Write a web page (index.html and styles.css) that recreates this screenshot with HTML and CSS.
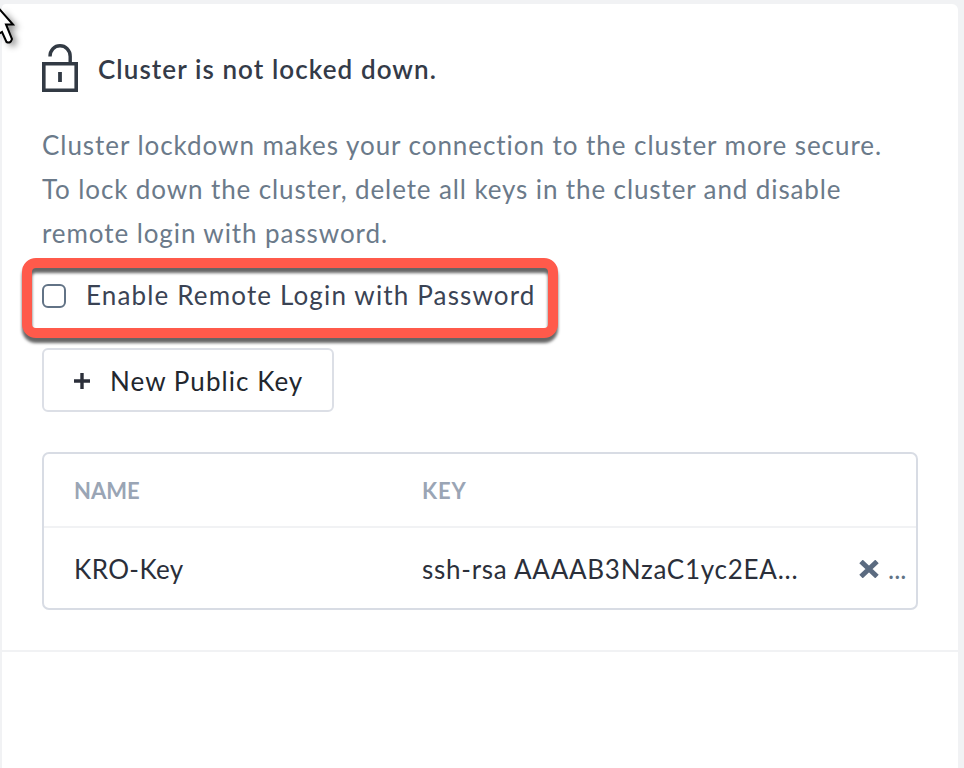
FILE: index.html
```html
<!DOCTYPE html>
<html lang="en">
<head>
<meta charset="utf-8">
<title>Cluster Lockdown</title>
<link rel="stylesheet" href="styles.css">
</head>
<body>
<main class="card">
  <section class="lockdown">
    <header class="status">
      <svg class="lock" width="36" height="50" viewBox="0 0 36 50" fill="none" stroke="#323a44">
        <path d="M8 13.500C8 7 12.500 2.800 18 2.800S28.200 7 28.200 13.500V20" stroke-width="3.400"/>
        <path d="M1.800 20.800H34.200V47.200H1.800Z" stroke-width="3.600"/>
        <path d="M18 29V39" stroke-width="3.800"/>
      </svg>
      <h1 class="title">Cluster is not locked down.</h1>
    </header>
    <p class="description">
      <span class="line line-1">Cluster lockdown makes your connection to the cluster more secure.</span>
      <span class="line line-2">To lock down the cluster, delete all keys in the cluster and disable</span>
      <span class="line line-3">remote login with password.</span>
    </p>
    <label class="remote-login">
      <input class="checkbox" type="checkbox">
      <span>Enable Remote Login with Password</span>
    </label>
    <button class="new-key" type="button">
      <svg width="16" height="16" viewBox="0 0 16 16" stroke="#2b2f3a" stroke-width="3.400"><path d="M8 0V16M0 8H16"/></svg>
      <span>New Public Key</span>
    </button>
    <div class="keys">
      <div class="row head"><span>NAME</span><span class="key-head">KEY</span></div>
      <div class="row entry">
        <span class="name">KRO-Key</span>
        <span class="key">ssh-rsa AAAAB3NzaC1yc2EA...</span>
        <span class="actions">
          <svg width="20" height="18" viewBox="0 0 20 18" stroke="#5b6b80" stroke-width="5"><path d="M2 1.500L18 16.500M18 1.500L2 16.500"/></svg>
          <span>...</span>
        </span>
      </div>
    </div>
  </section>
</main>
<svg class="cursor" width="28" height="52" viewBox="0 0 28 52"><path d="M-6 3L13 24.500H6L12 39Q10.500 44 6.500 42L2 32L-8 38Z" fill="#fff" stroke="#000" stroke-width="2"/></svg>
</body>
</html>
```

FILE: styles.css
```css
* { box-sizing: border-box; }
body {
  margin: 0;
  height: 768px;
  padding: 4px 6px 0 2px;
  overflow: hidden;
  background: #f1f2f4;
  font-family: Lato, "Liberation Sans", sans-serif;
  font-size: 26px;
  font-variant-ligatures: none;
  color: #2b2f3a;
}
.card { height: 764px; background: #fff; border-radius: 4px 6px 0 0; }
.lockdown { height: 648px; padding: 37px 40px 0; border-bottom: 2px solid #f1f2f4; }
.status { display: flex; align-items: center; gap: 20px; height: 54px; }
.lock { flex: none; }
.title { margin: 2px 0 0; font-size: 26px; font-weight: 600; line-height: 44px; letter-spacing: 1.08px; white-space: nowrap; color: #343b48; }
.description { margin: 28px 0 0; color: #6b7a8a; line-height: 44px; white-space: nowrap; }
.line { display: table; }
.line-1 { letter-spacing: .95px; }
.line-2 { letter-spacing: .89px; }
.line-3 { letter-spacing: .92px; }
.remote-login {
  position: relative;
  display: flex;
  align-items: center;
  gap: 20px;
  height: 80px;
  width: 536px;
  margin: 3px 0 0 -20px;
  padding: 0 20px 6px;
  color: #3a4354;
  letter-spacing: 1.15px;
  white-space: nowrap;
}
.remote-login::after {
  content: "";
  position: absolute;
  inset: 0;
  border: 10px solid #ff5a4b;
  border-radius: 14px;
  filter: drop-shadow(0 5px 1.5px rgba(0, 0, 0, .6));
}
.checkbox { appearance: none; flex: none; width: 24px; height: 24px; margin: 2px 0 0; border: 2px solid #627386; border-radius: 6px; background: #fff; }
.new-key {
  display: flex;
  align-items: center;
  justify-content: flex-start;
  gap: 20px;
  width: 292px;
  height: 64px;
  margin-top: 10px;
  padding: 1px 20px 0 30px;
  border: 2px solid #dcdfe6;
  border-radius: 6px;
  background: #fff;
  font: inherit;
  color: #22272e;
  letter-spacing: 1.05px;
  white-space: nowrap;
}
.keys { margin-top: 40px; width: 876px; height: 158px; border: 2px solid #d8dce4; border-radius: 7px; }
.row { display: grid; grid-template-columns: 348px 437px 1fr; align-items: center; padding-left: 30px; white-space: nowrap; }
.head { height: 74px; border-bottom: 2px solid #f1f2f4; font-size: 22px; font-weight: 700; color: #9aa5b5; }
.key-head { letter-spacing: .9px; }
.entry { height: 80px; padding-top: 2px; }
.name { letter-spacing: .4px; }
.key { letter-spacing: .74px; }
.actions { display: flex; align-items: center; gap: 9px; color: #627386; }
.cursor { position: absolute; left: 0; top: 0; filter: drop-shadow(4px 3px 3px rgba(0, 0, 0, .4)); }
```
